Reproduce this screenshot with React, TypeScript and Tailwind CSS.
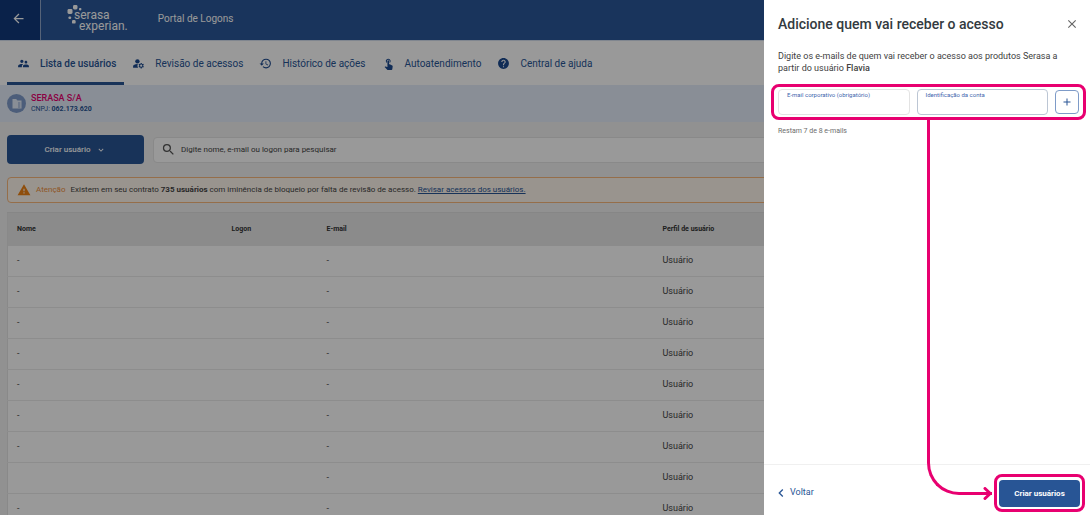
import type { ReactNode } from "react";
import {
  MdAdd,
  MdArrowBack,
  MdChevronLeft,
  MdClose,
  MdExpandMore,
  MdHelp,
  MdHistory,
  MdManageAccounts,
  MdSearch,
  MdSupervisorAccount,
  MdTouchApp,
  MdWarning,
} from "react-icons/md";

const rows = [
  { nome: "-", email: "-", perfil: "Usuário" },
  { nome: "-", email: "-", perfil: "Usuário" },
  { nome: "-", email: "-", perfil: "Usuário" },
  { nome: "-", email: "-", perfil: "Usuário" },
  { nome: "-", email: "-", perfil: "Usuário" },
  { nome: "-", email: "-", perfil: "Usuário" },
  { nome: "-", email: "-", perfil: "Usuário" },
  { nome: "", email: "-", perfil: "Usuário" },
  { nome: "-", email: "-", perfil: "Usuário" },
];

function Logo() {
  return (
    <div className="relative flex flex-col pl-[6px] text-[12px] leading-[11px] text-white" aria-label="Serasa Experian">
      <svg className="absolute -left-px -top-[5px] h-5 w-4" viewBox="0 0 16 20" fill="currentColor" aria-hidden="true">
        <rect x="6" y="0" width="4.5" height="4.5" rx="1.4" />
        <rect x="0.5" y="4" width="5" height="5" rx="1.4" />
        <rect x="12" y="3" width="2.4" height="2.4" rx="0.8" />
        <rect x="1.5" y="11.5" width="2.6" height="2.6" rx="0.8" />
        <rect x="5" y="15" width="3.6" height="3.6" rx="1.2" />
      </svg>
      <span>serasa</span>
      <span className="pl-[5px]">experian.</span>
    </div>
  );
}

function NavItem({ icon, active, children }: { icon: ReactNode; active?: boolean; children: ReactNode }) {
  return (
    <a
      href="#"
      className={
        active
          ? "flex items-center gap-[10px] border-b-3 border-[#285595] pl-[10px] pr-2 pt-[3px] font-medium text-[#285595]"
          : "flex items-center gap-[10px] border-b-3 border-transparent px-2 pt-[3px] text-[#285595]"
      }
    >
      <span className="text-[13px] text-[#1c4a8f]">{icon}</span>
      {children}
    </a>
  );
}

function UsersPage() {
  return (
    <div className="flex h-full flex-col bg-[#f2f2f2]">
      <header className="flex h-10 shrink-0 items-center bg-[#2a5799] text-white">
        <button type="button" aria-label="Voltar ao início" className="flex h-full w-10 items-center justify-center bg-[#113a7c] pb-1 pr-1 text-[15px]">
          <MdArrowBack />
        </button>
        <div className="h-full border-l border-[#8fa6c8] pl-[27px] pt-[10px]">
          <Logo />
        </div>
        <span className="pl-[30px] pb-1 text-[10px]">Portal de Logons</span>
      </header>

      <nav className="flex h-[45px] shrink-0 border-t border-[#d6e0ee] bg-white pl-[7px] text-[10px]">
        <NavItem active icon={<MdSupervisorAccount />}>Lista de usuários</NavItem>
        <NavItem icon={<MdManageAccounts />}>Revisão de acessos</NavItem>
        <NavItem icon={<MdHistory />}>Histórico de ações</NavItem>
        <NavItem icon={<MdTouchApp />}>Autoatendimento</NavItem>
        <NavItem icon={<MdHelp />}>Central de ajuda</NavItem>
      </nav>

      <section className="flex h-[37px] shrink-0 items-center gap-[5px] bg-[#e5edfa] pl-[7px] text-[7px] leading-[11px]">
        <span className="flex size-[19px] items-center justify-center rounded-full bg-[#7f9ccb]">
          <svg viewBox="0 0 12 12" className="size-3" fill="none" aria-hidden="true">
            <path d="M1.5 1h3.6l1.4 1.6h4v8h-9z" fill="#e5edfa" />
            <path d="M7 5h2.3M7 7h2.3M7 9h2.3" stroke="#7f9ccb" strokeWidth="0.9" />
          </svg>
        </span>
        <div>
          <p className="text-[9px] font-medium text-[#e80070]">SERASA S/A</p>
          <p className="text-[#285595]">
            CNPJ: <b>062.173.620</b>
          </p>
        </div>
      </section>

      <main className="flex min-h-0 flex-1 flex-col pl-[7px] pt-[13px]">
        <div className="flex items-center gap-[9px] pr-[7px]">
          <button type="button" className="flex h-[29px] w-[137px] items-center justify-center gap-[6px] rounded bg-[#285595] text-[8px] font-medium text-white">
            Criar usuário <MdExpandMore className="text-[10px]" />
          </button>
          <label className="flex h-[26px] flex-1 items-center gap-[5px] rounded border border-[#e4e4e4] bg-white pl-[7px]">
            <MdSearch className="text-[15px] text-[#555]" aria-hidden="true" />
            <input
              type="search"
              aria-label="Pesquisar usuários"
              placeholder="Digite nome, e-mail ou logon para pesquisar"
              className="flex-1 bg-transparent text-[8px] text-[#444] outline-none placeholder:text-[#444]"
            />
          </label>
        </div>

        <div className="mr-[7px] mt-[13px] flex h-[26px] shrink-0 items-center rounded border border-[#f9b77c] bg-[#fff7ed] pl-[9px] text-[8px] text-[#444]">
          <MdWarning className="text-[14px] text-[#ef8214]" aria-hidden="true" />
          <span className="px-[5px] text-[#ef8f3c]">Atenção</span>
          <p>
            Existem em seu contrato <b>735 usuários</b> com iminência de bloqueio por falta de revisão de acesso.{" "}
            <a href="#" className="text-[#285595] underline">Revisar acessos dos usuários.</a>
          </p>
        </div>

        <table className="mt-[9px] w-full table-fixed border-l border-[#e4e4e4] bg-white text-left text-[9px] text-[#444]">
          <colgroup>
            <col className="w-[215px]" />
            <col className="w-[95px]" />
            <col className="w-[336px]" />
            <col />
          </colgroup>
          <thead className="bg-[#e8e8e8] text-[7px] text-[#333]">
            <tr className="h-[33px] border-t border-[#e0e0e0]">
              <th className="pl-[9px]">Nome</th>
              <th className="pl-[9px]">Logon</th>
              <th className="pl-[9px]">E-mail</th>
              <th className="pl-[9px]">Perfil de usuário</th>
            </tr>
          </thead>
          <tbody>
            {rows.map((row, i) => (
              <tr key={i} className="h-[31px] border-b border-[#ececec]">
                <td className="pl-[9px]">{row.nome}</td>
                <td />
                <td className="pl-[9px]">{row.email}</td>
                <td className="pl-[9px]">{row.perfil}</td>
              </tr>
            ))}
          </tbody>
        </table>
      </main>
    </div>
  );
}

function Field({ label, className }: { label: string; className: string }) {
  return (
    <label className={className}>
      <span className="pl-2 text-[6px] leading-[10px] text-[#3f66ae]">{label}</span>
      <input type="text" className="min-h-0 w-full flex-1 bg-transparent px-2 text-[8px] outline-none" />
    </label>
  );
}

function AccessDrawer() {
  return (
    <aside className="absolute inset-y-0 right-0 flex w-[326px] flex-col bg-white text-[#414141]">
      <header className="flex items-center justify-between pl-[14px] pr-[11px] pt-[14px]">
        <h1 className="text-[14px] font-medium leading-5 text-[#333a40]">Adicione quem vai receber o acesso</h1>
        <button type="button" aria-label="Fechar" className="text-[14px] text-[#666]">
          <MdClose />
        </button>
      </header>
      <p className="px-[14px] pt-4 text-[9px] leading-3">
        Digite os e-mails de quem vai receber o acesso aos produtos Serasa a partir do usuário{" "}
        <span className="font-medium">Flavia</span>
      </p>

      <div className="ml-[7px] mr-1 mt-[10px] flex h-9 items-center gap-[7px] rounded-lg border-3 border-[#e80070] px-1">
        <Field label="E-mail corporativo (obrigatório)" className="flex h-[26px] flex-1 flex-col rounded border border-[#e3e3e3]" />
        <Field label="Identificação da conta" className="flex h-[26px] flex-1 flex-col rounded border border-[#bcc6d4]" />
        <button type="button" aria-label="Adicionar e-mail" className="flex h-6 w-6 items-center justify-center rounded border border-[#7e9bc8] text-[12px] text-[#285595]">
          <MdAdd />
        </button>
      </div>
      <p className="pl-[14px] pt-[5px] text-[7px] leading-3 text-[#6d6d6d]">Restam 7 de 8 e-mails</p>

      <footer className="mt-auto flex h-[51px] items-center justify-between border-t border-[#f0f0f0] pl-[9px] pr-[5px] pt-[6px]">
        <button type="button" className="flex items-center gap-px text-[9px] text-[#285595]">
          <MdChevronLeft className="text-[16px]" />
          Voltar
        </button>
        <div className="rounded-lg border-3 border-[#e80070] p-[2px]">
          <button type="button" className="h-[27px] w-[81px] rounded bg-[#285595] text-[8px] font-bold text-white">
            Criar usuários
          </button>
        </div>
      </footer>

      <div className="pointer-events-none absolute bottom-[20px] left-[163px] right-[98px] top-[120px] rounded-bl-[32px] border-b-3 border-l-3 border-[#e80070]">
        <svg className="absolute -bottom-[8px] right-0 h-[13px] w-[9px]" viewBox="0 0 9 13" fill="none" aria-hidden="true">
          <path d="M2 1.5L7.3 6.5L2 11.5" stroke="#e80070" strokeWidth="3" strokeLinecap="round" strokeLinejoin="round" />
        </svg>
      </div>
    </aside>
  );
}

export default function App() {
  return (
    <div className="relative h-screen overflow-hidden font-[Roboto,sans-serif]">
      <UsersPage />
      <div className="absolute inset-0 bg-black/40" />
      <AccessDrawer />
    </div>
  );
}
